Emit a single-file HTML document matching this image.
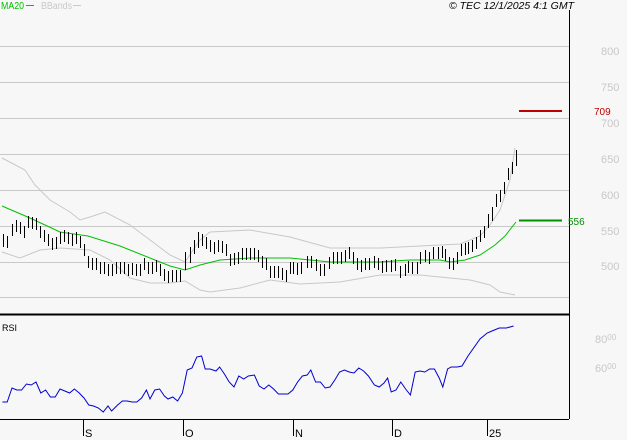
<!DOCTYPE html>
<html><head><style>
body{margin:0;background:#f7f7f7;}
svg{display:block;font-family:"Liberation Sans",sans-serif;}
</style></head><body>
<svg width="627" height="440" viewBox="0 0 627 440">
<rect width="627" height="440" fill="#f7f7f7"/>
<g stroke="#c8c8c8" stroke-width="1">
<line x1="0" y1="46.5" x2="569" y2="46.5"/><line x1="0" y1="82.5" x2="569" y2="82.5"/>
<line x1="0" y1="118.5" x2="569" y2="118.5"/><line x1="0" y1="154.5" x2="569" y2="154.5"/>
<line x1="0" y1="190.5" x2="569" y2="190.5"/><line x1="0" y1="226.5" x2="569" y2="226.5"/>
<line x1="0" y1="262.5" x2="569" y2="262.5"/><line x1="0" y1="297.5" x2="569" y2="297.5"/>
</g>
<g fill="#c8c8c8" font-size="11">
<text x="601" y="55">800</text><text x="601" y="91">750</text><text x="601" y="127">700</text>
<text x="601" y="163">650</text><text x="601" y="199">600</text><text x="601" y="235">550</text><text x="601" y="270">500</text>
<text x="595" y="343">80<tspan font-size="8" dy="-3">00</tspan></text>
<text x="595" y="372">60<tspan font-size="8" dy="-3">00</tspan></text>
</g>
<line x1="569.5" y1="10" x2="569.5" y2="419" stroke="#000"/>
<line x1="0" y1="314.5" x2="569" y2="314.5" stroke="#000" stroke-width="2"/>
<line x1="0" y1="419.5" x2="569" y2="419.5" stroke="#000"/>
<g stroke="#000"><line x1="83.5" y1="420" x2="83.5" y2="436"/><line x1="183.5" y1="420" x2="183.5" y2="436"/><line x1="293.5" y1="420" x2="293.5" y2="436"/><line x1="392.5" y1="420" x2="392.5" y2="436"/><line x1="487.5" y1="420" x2="487.5" y2="436"/></g>
<g font-size="11" fill="#000"><text x="85" y="437">S</text><text x="185" y="437">O</text><text x="295" y="437">N</text><text x="394" y="437">D</text><text x="489" y="437">25</text></g>
<text x="1" y="9" font-size="10" fill="#00c000" textLength="23" lengthAdjust="spacingAndGlyphs">MA20</text><line x1="26" y1="5.5" x2="34" y2="5.5" stroke="#00c000"/>
<text x="41" y="9" font-size="10" fill="#c8c8c8" textLength="31" lengthAdjust="spacingAndGlyphs">BBands</text><line x1="73" y1="5.5" x2="81" y2="5.5" stroke="#c8c8c8"/>
<text x="574" y="9" font-size="10.5" font-style="italic" text-anchor="end" fill="#000">© TEC 12/1/2025 4:1 GMT</text>
<text x="2" y="331" font-size="9" fill="#000">RSI</text>
<line x1="519" y1="111" x2="562" y2="111" stroke="#c00000" stroke-width="2"/>
<text x="594" y="115" font-size="10" fill="#c00000">709</text>
<line x1="519" y1="220.5" x2="562" y2="220.5" stroke="#009000" stroke-width="2"/>
<text x="568" y="225" font-size="10" fill="#009000">556</text>
<polyline fill="none" stroke="#c8c8c8" points="2,158 25,170 35,185 50,200 70,212 80,220 90,217 105,212 130,225 150,240 170,255 185,262 200,240 210,232 250,230 290,237 330,248 380,248 420,246 460,244 480,236 490,225 500,210 510,180 515,148"/>
<polyline fill="none" stroke="#c8c8c8" points="2,252 20,258 40,250 60,248 90,250 110,260 130,278 150,283 170,283 185,281 200,290 210,292 240,288 270,280 285,282 300,284 340,282 380,275 420,275 450,278 470,280 490,285 500,292 515,295"/>
<polyline fill="none" stroke="#00c000" points="2,206 30,218 60,232 88,236 120,246 150,258 170,266 185,270 200,265 220,260 250,258 290,258 330,262 380,262 410,260 440,260 450,262 465,260 480,255 495,245 505,236 516,222"/>
<polyline fill="none" stroke="#0000d0" points="2.4,402 7.2,402 12,388 16.8,390 21.6,390 26.4,384 31.2,385 36,382 40.8,393 45.6,390 50.4,397 55.2,397 60,389 64.8,391 69.6,393 74.4,389 79.2,393 84,398 88.8,405 93.6,406 98.4,408 103.2,412 108,406 111.6,411 117.6,405 122.4,401 127.2,401 132,402 136.8,402 141.6,398 146.4,390 150,399 154.8,390 159.6,389 164.4,396 168,399 172.8,397 177.6,401 182.4,393 187.2,370 192,368 196.8,357 201.6,356 205.2,369 210,369 216,371 219.6,367 224.4,374 229.2,382 234,387 238.8,376 243.6,379 248.4,376 254.4,375 259.2,386 264,389 268.8,385 273.6,389 278.4,394 288,394 292.8,390 297.6,382 302.4,376 307.2,375 310.8,370 315.6,382 320.4,382 325.2,388 330,387 334.8,380 339.6,372 344.4,370 349.2,372 354,373 358.8,368 363.6,371 368.4,376 374.4,385 379.2,387 384,383 387.6,378 391.2,392 396,390 400.8,382 405.6,389 410.4,395 415.2,372 420,371 424.8,372 429.6,369 434.4,369 439.2,378 442.8,387 447.6,369 451.2,367 457.2,367 462,366 468,356 480,339 487.2,333 492,331 499.2,328 506.4,328 513.6,326"/>
<g stroke="#000" stroke-width="1" fill="none" transform="translate(0.5,0)">
<path d="M3 234v13M7 236v12M12 224v12M16 220v12M20 222v12M24 226v12M28 216v12M32 217v12M36 218v12M40 226v12M44 230v12M48 234v12M52 238v12M56 237v12M60 232v12M64 230v12M68 232v12M72 234v12M76 232v12M80 236v12M84 244v12M88 256v12M92 258v12M96 258v12M100 262v12M104 262v12M108 264v12M112 264v12M116 262v12M120 262v12M124 262v12M128 264v12M132 263v12M136 264v12M140 264v12M144 258v12M148 262v12M152 262v12M156 260v12M160 264v12M164 269v12M168 271v12M172 270v12M176 270v12M180 270v12M185 252v18M190 247v16M194 240v14M198 232v16M202 234v12M206 237v12M210 240v12M214 242v12M218 240v12M222 241v12M226 244v12M230 254v12M234 253v12M238 252v12M242 248v12M246 248v12M250 248v12M254 248v12M258 250v12M262 256v12M266 258v12M270 266v12M274 266v12M278 266v12M282 268v12M286 270v12M290 262v12M293 262v12M297 263v12M301 262v12M307 256v12M311 256v12M316 259v12M320 264v12M324 264v12M329 257v12M333 252v12M337 252v12M341 252v12M345 250v12M349 247v12M353 252v12M357 258v12M361 260v12M365 258v12M369 258v12M374 256v12M378 258v12M382 261v12M386 260v12M391 260v12M395 259v12M400 266v12M405 264v12M408 261v12M412 262v12M417 262v12M420 252v12M425 250v12M429 252v12M433 247v12M438 247v12M442 246v12M445 249v12M449 257v12M453 258v12M457 252v12M461 244v12M465 243v12M468 242v12M472 240v12M476 237v12M480 230v12M484 226v12M488 214v14M492 207v14M496 194v13M500 190v12M504 182v12M508 168v12M512 162v12M516 150v16"/>
</g>
</svg>
</body></html>
